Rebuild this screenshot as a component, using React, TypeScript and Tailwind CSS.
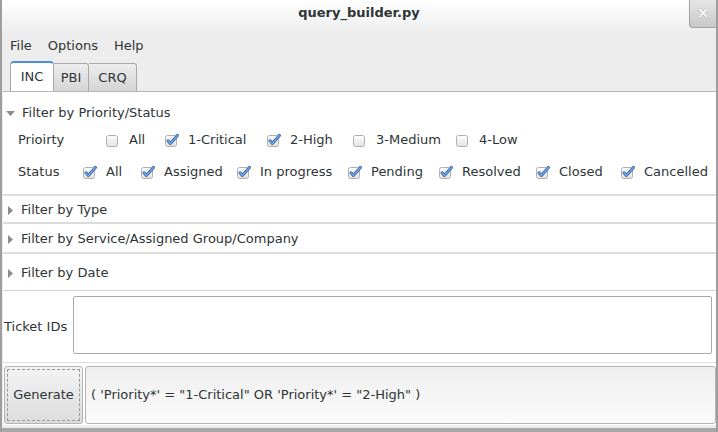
import React from "react";

type Item = { label: string; checked: boolean; w: number };

const priority: Item[] = [
  { label: "All", checked: false, w: 59 },
  { label: "1-Critical", checked: true, w: 102 },
  { label: "2-High", checked: true, w: 86 },
  { label: "3-Medium", checked: false, w: 103 },
  { label: "4-Low", checked: false, w: 80 },
];

const status: Item[] = [
  { label: "All", checked: true, w: 58 },
  { label: "Assigned", checked: true, w: 96 },
  { label: "In progress", checked: true, w: 111 },
  { label: "Pending", checked: true, w: 91 },
  { label: "Resolved", checked: true, w: 97 },
  { label: "Closed", checked: true, w: 85 },
  { label: "Cancelled", checked: true, w: 80 },
];

function Check({ checked }: { checked: boolean }) {
  return (
    <svg width="15" height="15" viewBox="0 0 15 15" className="shrink-0">
      <defs>
        <linearGradient id="cbg" x1="0" y1="0" x2="0" y2="1">
          <stop offset="0" stopColor="#ffffff" />
          <stop offset="1" stopColor="#e2e2e2" />
        </linearGradient>
      </defs>
      <rect x="0.5" y="2.5" width="11" height="11" rx="2" fill="url(#cbg)" stroke="#b0b0b0" />
      {checked && (
        <>
          <path d="M3 7.8 L5.4 10.4 L12.4 2.4" fill="none" stroke="#2f5f9e" strokeWidth="3" strokeLinecap="round" strokeLinejoin="round" />
          <path d="M3 7.8 L5.4 10.4 L12.4 2.4" fill="none" stroke="#72a9e8" strokeWidth="1.5" strokeLinecap="round" strokeLinejoin="round" />
        </>
      )}
    </svg>
  );
}

function Opt({ item }: { item: Item }) {
  return (
    <div className="flex items-center shrink-0" style={{ width: item.w }}>
      <Check checked={item.checked} />
      <span className="ml-[8px]">{item.label}</span>
    </div>
  );
}

function Closed({ label }: { label: string }) {
  return (
    <div className="flex items-center h-full pt-[2px]">
      <svg width="5" height="9" viewBox="0 0 5 9" className="ml-[5px]">
        <path d="M0 0 L5 4.5 L0 9 Z" fill="#8b8b8b" />
      </svg>
      <span className="ml-[8px]">{label}</span>
    </div>
  );
}

export default function App() {
  return (
    <div className="relative w-[718px] h-[432px] overflow-hidden bg-[#ededed] border-x-2 border-[#9e9e9e] font-['DejaVu_Sans',sans-serif] text-[13px] text-[#2e3436]">
      {/* title bar */}
      <div className="h-[34px] bg-gradient-to-b from-white to-[#ededed] flex items-start justify-center pt-[3px]">
        <span className="font-bold text-[13px] text-[#2e3436]">query_builder.py</span>
      </div>
      <div className="absolute right-0 top-0 w-[27px] h-[28px] rounded-bl-[4px] border-l border-b border-[#a2a2a2] bg-gradient-to-b from-[#e6e6e6] to-[#c9c9c9] flex items-center justify-center">
        <span className="text-white text-[15px] font-bold leading-none [text-shadow:0_0_1px_#777]">×</span>
      </div>

      {/* menu */}
      <div className="h-[23px] flex items-center gap-[16px] pl-[8px]">
        <span>File</span>
        <span>Options</span>
        <span>Help</span>
      </div>

      {/* tabs */}
      <div className="h-[34px] flex items-end pl-[8px]">
        <div className="h-[30px] w-[44px] bg-white border border-b-0 border-[#a9a9a9] border-t-2 border-t-[#4a90d9] rounded-t-[4px] flex items-center justify-center">
          INC
        </div>
        <div className="h-[28px] w-[35px] bg-gradient-to-b from-[#ededed] to-[#d5d5d5] border border-l-0 border-b-0 border-[#a9a9a9] rounded-tr-[3px] flex items-center justify-center">
          PBI
        </div>
        <div className="h-[28px] w-[48px] bg-gradient-to-b from-[#ededed] to-[#d5d5d5] border border-l-0 border-b-0 border-[#a9a9a9] rounded-tr-[3px] flex items-center justify-center">
          CRQ
        </div>
      </div>

      {/* content */}
      <div className="bg-white border-t border-[#b6b6b6] ml-[1px] h-[334px] flex flex-col">
        <div className="h-[11px]" />
        <div className="h-[20px] flex items-center">
          <svg width="9" height="5" viewBox="0 0 9 5" className="ml-[3px]">
            <path d="M0 0 L9 0 L4.5 5 Z" fill="#8b8b8b" />
          </svg>
          <span className="ml-[7px]">Filter by Priority/Status</span>
        </div>
        <div className="h-[24px] mt-[5px] flex items-center pl-[15px]">
          <span className="w-[88px] shrink-0">Prioirty</span>
          {priority.map((p) => (
            <Opt key={p.label} item={p} />
          ))}
        </div>
        <div className="h-[24px] mt-[8px] flex items-center pl-[15px]">
          <span className="w-[65px] shrink-0">Status</span>
          {status.map((p) => (
            <Opt key={p.label} item={p} />
          ))}
        </div>
        <div className="h-[2px] mt-[10px] bg-[#dcdcdc]" />
        <div className="h-[26px]">
          <Closed label="Filter by Type" />
        </div>
        <div className="h-[2px] bg-[#dcdcdc]" />
        <div className="h-[28px]">
          <Closed label="Filter by Service/Assigned Group/Company" />
        </div>
        <div className="h-[2px] bg-[#dcdcdc]" />
        <div className="h-[36px]">
          <Closed label="Filter by Date" />
        </div>
        <div className="h-[1px] bg-[#d6d6d6]" />

        <div className="flex items-center mt-[5px] pl-[1px] pr-[4px]">
          <span className="w-[69px] shrink-0 pt-[3px]">Ticket IDs</span>
          <div className="flex-1 h-[58px] border border-[#aaaaaa] rounded-[2px] bg-white" />
        </div>
        <div className="h-[1px] mt-[8px] bg-[#dedede]" />
        <div className="flex mt-[3px] pl-[1px] gap-[2px]">
          <div className="w-[79px] h-[58px] rounded-[3px] border border-[#b4b4b4] bg-gradient-to-b from-[#f4f4f4] to-[#dcdcdc] flex items-center justify-center p-[2px]">
            <div className="w-full h-full border border-dashed border-[#9a9a9a] flex items-center justify-center">
              Generate
            </div>
          </div>
          <div className="flex-1 h-[58px] rounded-[3px] border border-[#b4b4b4] bg-gradient-to-b from-[#efefef] to-[#fbfbfb] flex items-center pl-[5px]">
            ( 'Priority*' = "1-Critical" OR 'Priority*' = "2-High" )
          </div>
        </div>
      </div>
      <div className="absolute left-0 right-0 bottom-0 h-[4px] bg-[#a8a8a8]" />
    </div>
  );
}
